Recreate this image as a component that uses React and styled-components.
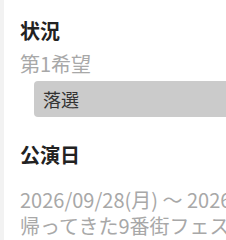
import React from 'react'
import styled, { createGlobalStyle } from 'styled-components'

const GlobalStyle = createGlobalStyle`
  html, body {
    margin: 0;
    padding: 0;
    background: #fff;
    overflow: hidden;
  }
  body {
    font-family: "Noto Sans CJK JP", "Noto Sans", sans-serif;
  }
`

const Page = styled.div`
  display: flex;
  min-height: 240px;
`

const SideStrip = styled.div`
  flex: 0 0 4px;
  background: #f2f2f2;
`

const Content = styled.div`
  flex: 1;
  min-width: 0;
  padding: 17px 0 0 16px;
`

const Section = styled.section`
  & + & {
    margin-top: 24px;
  }
`

const Heading = styled.h3`
  margin: 0 0 ${(p) => p.$gap || 6}px;
  font-size: 20px;
  font-weight: 700;
  line-height: 28px;
  color: #222;
`

const Label = styled.div`
  font-size: 20px;
  line-height: 26px;
  color: #a8a8a8;
  white-space: nowrap;
`

const ResultBox = styled.div`
  margin: 4px 0 0 14px;
  width: 240px;
  height: 36px;
  box-sizing: border-box;
  display: flex;
  align-items: center;
  padding-left: 9px;
  background: #cbcbcb;
  border-radius: 4px;
  font-size: 18px;
  color: #333;
`

const App = () => (
  <>
    <GlobalStyle />
    <Page>
      <SideStrip />
      <Content>
        <Section>
          <Heading>状況</Heading>
          <Label>第1希望</Label>
          <ResultBox>落選</ResultBox>
        </Section>
        <Section>
          <Heading $gap={18}>公演日</Heading>
          <Label>2026/09/28(月) ～ 2026/09/28(月)</Label>
          <Label>帰ってきた9番街フェスティバル</Label>
        </Section>
      </Content>
    </Page>
  </>
)

export default App
